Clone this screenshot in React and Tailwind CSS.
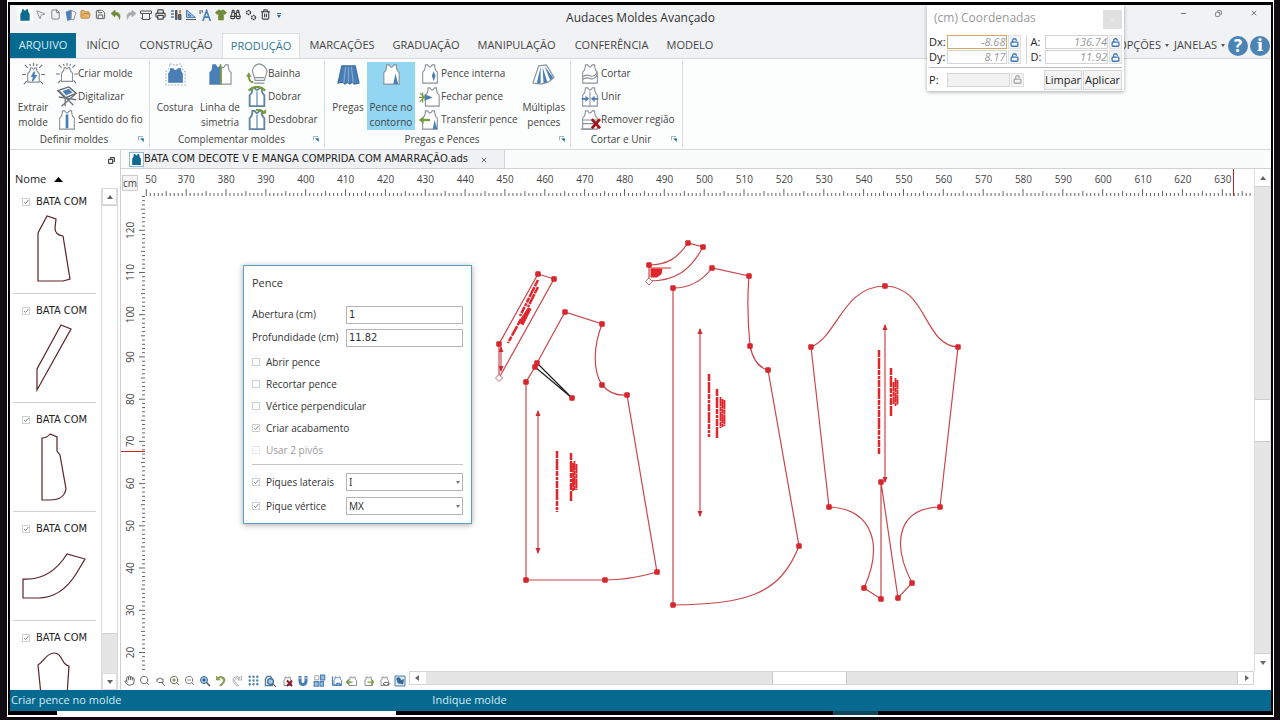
import React from "react";
import {
  MousePointer2, File, FolderOpen, Save, Printer, Binoculars, Trash2,
  Hand, Search, ZoomIn, ZoomOut, Grip, LockOpen, Copy, X, Minus,
} from "lucide-react";

const TANK = "M7 2 L9.5 2 Q12 7 14.5 2 L17 2 Q17 8 20 10 L20 22 L4 22 L4 10 Q7 8 7 2 Z";
const BLUE = "#4a7fb5";
const LINE = "#8b9299";
const GREEN = "#7a9a3c";

function Svg({ className = "size-[22px]", children }) {
  return (
    <svg className={className} viewBox="0 0 24 24" fill="none" stroke={LINE} strokeWidth="1.2" aria-hidden="true">
      {children}
    </svg>
  );
}

function Rays() {
  return <path d="M12 0V3M3 2L6 5M21 2L18 5M0 12H4M24 12H20M2 22L5 19M22 22L19 19M8 1L9 3M16 1L15 3" stroke="#6c747b" strokeWidth="1.200" />;
}
function SmallTank({ fill = "#fff" }) {
  return <path d="M9 5H10.5Q12 8 13.5 5H15Q15 9 18 11V20H6V11Q9 9 9 5Z" fill={fill} stroke="#8b9299" />;
}

const icons = {
  extrair: <><Rays /><SmallTank /><path d="M13 9L10 14H12L11 19L15 13H12.500Z" fill={BLUE} stroke={BLUE} /></>,
  criar: <><Rays /><SmallTank /></>,
  digitalizar: <><path d="M2 5L14 1L22 8L10 13Z" fill="#fff" stroke="#5b6269" strokeWidth="1.5" /><path d="M7 5.500L14 3L18 7L11 10Z" fill={BLUE} stroke="none" /><path d="M4 6L19 21M21 9L6 22M10 13V22M3 12L22 15" stroke="#6c747b" strokeWidth="1.400" /></>,
  sentido: <><path d={TANK} fill="#fff" /><path d="M12 6V21" stroke={BLUE} strokeWidth="3" /></>,
  costura: <><path d="M6 1H9.500Q12 4 14.500 1H18Q18 7 22 9V23H2V9Q6 7 6 1Z" strokeDasharray="2 1.500" stroke="#a9bccd" /><path d="M7 6H9.500Q12 10 14.500 6H17Q17 9 19 11V20H5V11Q7 9 7 6Z" fill={BLUE} stroke={BLUE} /></>,
  simetria: <><path d="M11 4Q8 6 7 2H4Q4 8 1 10V22H11Z" fill={BLUE} stroke={BLUE} /><path d="M13 4Q16 6 17 2H20Q20 8 23 10V22H13Z" fill="#fff" /><path d="M12 1V23" stroke={GREEN} strokeWidth="1.500" /></>,
  bainha: <><path d="M14 1Q8 2 7 9L10 19H20L23 9Q21 2 14 1Z" fill="#fff" /><path d="M10 16H20M9 22H20" /><path d="M8 21Q3 21 3 13" stroke={GREEN} strokeWidth="2" /><path d="M0 15L3 10L6 15Z" fill={GREEN} stroke="none" /></>,
  dobrar: <><path d={TANK} fill="#fff" stroke="#5f84a8" strokeWidth="2" /><path d="M12 6V22" stroke={BLUE} /><path d="M3 5Q12 -3 21 5" stroke={GREEN} strokeWidth="2.500" /></>,
  desdobrar: <><path d={TANK} fill="#fff" stroke="#5f84a8" strokeWidth="2" /><path d="M12 6V22" stroke={BLUE} /><path d="M11 1Q17 0 20 5" stroke={GREEN} strokeWidth="2.500" /><path d="M16 5H22V0Z" fill={GREEN} stroke="none" /></>,
  pregas: <><path d="M5 3H19L23 21L18 22L16 20L13 22L11 20L8 22L6 20L1 21Z" fill={BLUE} stroke="#3b6c9f" /><path d="M9 4L7 21M12 4V20M15 4L17 21" stroke="#86abd0" /></>,
  contorno: <><path d={TANK} fill="#fff" /><path d="M16 11L14 22H19Z" fill={BLUE} stroke="none" /></>,
  interna: <><path d={TANK} fill="#fff" /><path d="M16 9L14 14L16 20L18 14Z" fill={BLUE} stroke="none" /></>,
  fechar: <><path d="M10 2H12Q14 7 17 2H19Q19 8 22 10V22H7V10Q10 8 10 2Z" fill="#fff" /><path d="M6 9L15 12.500L6 16Z" fill={BLUE} stroke="none" /><path d="M0 12.500H7M1 8L6 12L1 17M4 7V18" stroke={GREEN} strokeWidth="1.300" /></>,
  transferir: <><path d={TANK} fill="#fff" /><path d="M17 12L15 22H20Z" fill={BLUE} stroke="none" /><path d="M1 12H12" stroke={GREEN} strokeWidth="2.500" /><path d="M5 8V16L0 12Z" fill={GREEN} stroke="none" /></>,
  multiplas: <><path d="M7 3L15 2L23 15L17 20L9 22L1 21Z" fill="#fff" /><path d="M9 4L5 21H9ZM11 4L12 21L16 20ZM13 3L19 18L22 15Z" fill={BLUE} stroke="none" /></>,
  cortar: <><path d={TANK} fill="#fff" /><path d="M4 15Q8 12 12 14T20 10M4 18Q8 15 12 17T20 13" /></>,
  unir: <><path d={TANK} fill="#fff" /><path d="M12 6V22" /><path d="M3 14H8M21 14H16" stroke={BLUE} strokeWidth="2" /><path d="M7 10.500V17.500L11 14ZM17 10.500V17.500L13 14Z" fill={BLUE} stroke="none" /></>,
  remover: <><path d={TANK} fill="#fff" /><path d="M4 12H20M4 16H20M2 22H14" /><path d="M14 11L23 21M23 11L14 21" stroke="#a3161b" strokeWidth="3" /></>,
};

function BigButton({ icon, lines, active, className }) {
  return (
    <button type="button" className={`flex h-[68px] flex-col items-center justify-between text-[10px] leading-[15px] ${active ? "bg-[#92d6f2]" : ""} ${className}`}>
      <Svg className="mt-px size-[23px]">{icons[icon]}</Svg>
      <span className="flex h-[30px] flex-col">{lines.map((l) => <span key={l}>{l}</span>)}</span>
    </button>
  );
}

function SmallButtons({ items }) {
  return (
    <div className="flex flex-col">
      {items.map(([icon, label]) => (
        <button key={label} type="button" className="flex h-[23px] items-center text-left text-[10px] whitespace-nowrap">
          <Svg>{icons[icon]}</Svg>
          <span>{label}</span>
        </button>
      ))}
    </div>
  );
}

function Group({ title, className, children }) {
  return (
    <section className={`my-[2px] flex flex-col border-r border-[#d9dcdf] ${className}`}>
      <div className="flex h-[70px] items-start pt-px">{children}</div>
      <div className="flex flex-1 items-center pr-[5px] text-[10px]">
        <span className="flex-1 text-center">{title}</span>
        <button type="button" aria-label={`Opções de ${title}`}>
          <svg className="size-[6px]" viewBox="0 0 7 7" fill="none" stroke="#8fa3b0"><path d="M.5 5V.5H6" /><path d="M3 3L6.500 3V6.500L5 5Z" fill="#167094" stroke="#167094" strokeWidth=".5" /></svg>
        </button>
      </div>
    </section>
  );
}

function TankIcon({ className, color = "#0f6a92" }) {
  return <svg className={className} viewBox="0 0 24 24" aria-hidden="true"><path d={TANK} fill={color} /></svg>;
}

const BACK = "M10 2L2 9L10 16V12Q17 11 19 21Q24 7 10 6Z";
const FORWARD = "M14 2L22 9L14 16V12Q7 11 5 21Q0 7 14 6Z";
const l = "size-[11px]";
const quick = [
  ["Selecionar", <MousePointer2 className={l} color="#888" />],
  ["Novo", <File className={l} color="#777" />],
  ["Novo molde", <Svg className="size-[12px]"><path d="M2 6L12 2L15 20L5 23Z" fill={BLUE} stroke={BLUE} /><path d="M13 3L22 7L17 22L12 20Z" fill="#fff" strokeWidth="2" /></Svg>],
  ["Abrir", <FolderOpen className={l} color="#b9853f" fill="#e4b56d" />],
  ["Salvar", <Save className={l} color="#555" />],
  ["Desfazer", <Svg className="size-[12px]"><path d={BACK} fill="#71893a" stroke="#71893a" /></Svg>],
  ["Refazer", <Svg className="size-[12px]"><path d={FORWARD} fill="#aaa" stroke="#aaa" /></Svg>],
  ["Plotar", <Svg className="size-[12px]"><path d="M1 4H23V9H1ZM5 9V21H19V9M5 21L2 17M19 21L22 17" stroke="#555" strokeWidth="2" /></Svg>],
  ["Imprimir", <Printer className={l} color="#444" strokeWidth={2.5} />],
  ["Tabela", <Svg className="size-[12px]"><path d="M2 4H8M2 10H8M2 16H8" stroke={BLUE} strokeWidth="3" /><path d="M11 3H14V21H11ZM17 11H22V21H17Z" fill="#666" stroke="#555" strokeWidth="2" /><path d="M20 2V9" stroke="#b4763d" strokeWidth="3" /></Svg>],
  ["Medir", <Svg className="size-[12px]"><path d="M3 2V17H21ZM7 10V14H12Z" fill="#a8c8e2" stroke={BLUE} strokeWidth="2" /><path d="M2 21H22" stroke="#555" strokeWidth="2" /></Svg>],
  ["Texto", <Svg className="size-[13px]"><path d="M7 22L14 3L21 22M10 15H19" stroke={BLUE} strokeWidth="3" /><path d="M2 2V9M6 2V7" stroke="#555" strokeWidth="2" /></Svg>],
  ["Tecido", <Svg className="size-[12px]"><path d="M7 2H10Q12 6 14 2H17L23 7L20 11L17 9V22H7V9L4 11L1 7Z" fill="#71893a" stroke="#71893a" /></Svg>],
  ["Localizar", <Binoculars className={l} color="#444" strokeWidth={2.5} />],
  ["Configurar", <Svg className="size-[12px]"><circle cx="7" cy="7" r="4" stroke="#444" strokeWidth="3" strokeDasharray="3 1" /><circle cx="17" cy="17" r="4" stroke="#444" strokeWidth="3" strokeDasharray="3 1" /></Svg>],
  ["Excluir", <Trash2 className={l} color="#444" strokeWidth={2.5} />],
];

const tabs = [["INÍCIO", "w-[54px]"], ["CONSTRUÇÃO", "w-[92px]"], ["PRODUÇÃO", "w-[78px]"], ["MARCAÇÕES", "w-[84px]"], ["GRADUAÇÃO", "w-[84px]"], ["MANIPULAÇÃO", "w-[97px]"], ["CONFERÊNCIA", "w-[93px]"], ["MODELO", "w-[64px]"]];

function LockButton({ muted }) {
  return (
    <button type="button" aria-label="Travar" className="flex w-[13px] items-center justify-center border border-[#e0e0e0] bg-[#f5f5f5]">
      <LockOpen className="size-[9px]" color={muted ? "#aaa" : "#3f79b3"} strokeWidth={3.5} />
    </button>
  );
}

function Coord({ label, value, labelClass, active, muted }) {
  return (
    <div className="flex min-w-0 flex-1 gap-px">
      <label htmlFor={`c-${label}`} className={`shrink-0 ${labelClass}`}>{label}:</label>
      <input id={`c-${label}`} defaultValue={value} className={`h-[14px] w-0 min-w-0 flex-1 border text-right text-[11px] text-[#999] italic ${active ? "border-[#d2a866]" : "border-[#d4d4d4]"} ${muted ? "bg-[#f2f2f2]" : "bg-white"}`} />
      <LockButton muted={muted} />
    </div>
  );
}

function Coordinates() {
  return (
    <div role="dialog" aria-label="Coordenadas" className="absolute top-0 right-[147px] flex w-[197px] flex-col bg-white px-[2px] text-[11px] leading-[14px] text-[#222] shadow-[0_1px_4px_#0005]">
      <div className="flex h-[30px] items-start justify-between pt-[5px] pl-[5px] text-[12px] text-[#999]">
        <span className="leading-[16px]">(cm) Coordenadas</span>
        <button type="button" aria-label="Fechar" className="flex size-[19px] items-center justify-center bg-[#e0e0e0] text-[#f4f4f4]"><X className="size-[7px]" /></button>
      </div>
      <div className="flex gap-[5px]">
        <div className="flex flex-1 flex-col gap-px">
          <Coord label="Dx" value="-8.68" labelClass="w-[17px]" active />
          <Coord label="Dy" value="8.17" labelClass="w-[17px]" />
        </div>
        <div className="flex flex-1 flex-col gap-px border-l border-[#d5d5d5] pl-[4px]">
          <Coord label="A" value="136.74" labelClass="w-[13px]" />
          <Coord label="D" value="11.92" labelClass="w-[13px]" />
        </div>
      </div>
      <div className="mt-[3px] flex h-[24px] items-center gap-[20px] border-t border-[#bbb]">
        <Coord label="P" value="" labelClass="w-[17px]" muted />
        <div className="flex gap-px">
          <button type="button" className="h-[20px] w-[38px] border border-[#d8d8d8] bg-[#f4f4f4]">Limpar</button>
          <button type="button" className="h-[20px] w-[39px] border border-[#d8d8d8] bg-[#f4f4f4]">Aplicar</button>
        </div>
      </div>
    </div>
  );
}

function Check({ id, checked, disabled, label }) {
  return (
    <label htmlFor={id} className={`flex items-center gap-[6px] ${disabled ? "text-[#999]" : ""}`}>
      <span className="grid size-[8px]">
        <input id={id} type="checkbox" defaultChecked={checked} disabled={disabled} className={`peer col-start-1 row-start-1 size-[8px] appearance-none border bg-white ${disabled ? "border-[#e6e6e6]" : "border-[#cdd0d3]"}`} />
        <svg className="pointer-events-none invisible col-start-1 row-start-1 size-[8px] peer-checked:visible" viewBox="0 0 8 8" fill="none" stroke="#888"><path d="M2 4L3.500 5.500L6.500 2" /></svg>
      </span>
      {label}
    </label>
  );
}

const thumbs = [
  "M38 240V281H63L70 279L63 236Q55 235 55 228L56 219L47 216L38 233Z",
  "M37 390V369L61 325L71 329L37 390Z",
  "M42 500V438Q47 438 50 434L57 437V451L60 455L66 489Q64 500 50 500Z",
  "M23 598V579Q50 581 67 554L85 559L76 574Q61 598 38 598Z",
  "M41 695L38 665C44 662 46 653 54 653C63 653 61 665 69 666L67 695",
];

function PatternList() {
  return (
    <aside className="flex w-[111px] shrink-0 flex-col border-r border-[#cfcfcf] bg-white text-[#222]">
      <div className="flex h-[20px] items-center justify-end pr-[5px]"><button type="button" aria-label="Restaurar painel"><Copy className="size-[7px] rotate-90" strokeWidth={4} color="#444" /></button></div>
      <div className="flex h-[18px] items-center gap-[8px] pl-[5px] text-[11px]">Nome <svg className="h-[5px] w-[9px]" viewBox="0 0 9 5"><path d="M0 5L4.500 0L9 5Z" /></svg></div>
      <div className="flex min-h-0 flex-1">
        <ul className="flex-1 overflow-hidden pl-[3px]">
          {thumbs.map((d, i) => (
            <li key={d} className="mr-[5px] h-[109px] border-b border-[#cdd0d4] pt-[10px] first:h-[106px] first:pt-[7px]">
              <div className="pl-[9px] font-['DejaVu_Sans_Condensed','Open_Sans',sans-serif] text-[11px] leading-[14px]"><Check id={`t-${i}`} checked label="BATA COM" /></div>
              <svg className="h-[84px] w-full" viewBox={`13 ${209 + i * 109} 83 84`} fill="none" stroke="#5a2226" strokeWidth="1.200"><path d={d} /></svg>
            </li>
          ))}
        </ul>
        <div className="mr-[2px] flex w-[17px] flex-col border-x border-[#dadada] bg-[#e5e5e5]">
          <button type="button" aria-label="Subir" className="flex h-[17px] items-center justify-center border border-[#dcdcdc] bg-white"><Tri d="M0 4L3 0L6 4Z" /></button>
          <div className="flex-1 border-y border-[#d0d0d0] bg-white" />
          <div className="h-[39px]" />
          <button type="button" aria-label="Descer" className="flex h-[17px] items-center justify-center border border-[#dcdcdc] bg-white"><Tri d="M0 0L3 4L6 0Z" /></button>
        </div>
      </div>
    </aside>
  );
}

function Tri({ d }) {
  return <svg className="size-[6px]" viewBox="0 -1 6 6" fill="#666"><path d={d} /></svg>;
}

function HorizontalRuler() {
  const ticks = [];
  for (let i = 0; i < 278; i++) {
    const x = 146.3 + i * 3.985;
    const h = i % 10 === 0 ? 7 : i % 5 === 0 ? 5 : 3;
    ticks.push(`M${x.toFixed(1)} 196V${196 - h}`);
  }
  return (
    <svg className="h-[27px] min-w-0 flex-1" fontSize="10" fill="#444" textAnchor="middle">
      <g transform="translate(-145 -169)">
        <path d={ticks.join("")} stroke="#666" />
        <text x="151" y="183">50</text>
        {Array.from({ length: 27 }, (_, i) => <text key={i} x={186.2 + i * 39.87} y="183">{370 + i * 10}</text>)}
        <rect x="1233" y="169" width="1" height="27" fill="#b3262d" />
      </g>
    </svg>
  );
}

function VerticalRuler() {
  const ticks = [];
  for (let i = 0; i < 113; i++) {
    const y = 196.5 + i * 4.222;
    const k = (i + 2) % 10;
    const w = k === 0 ? 6 : k === 5 ? 4 : 3;
    ticks.push(`M145 ${y.toFixed(1)}H${145 - w}`);
  }
  return (
    <svg className="w-[24px] shrink-0" fontSize="10" fill="#444" textAnchor="middle">
      <g transform="translate(-121 -196)">
        <path d={ticks.join("")} stroke="#666" />
        {Array.from({ length: 11 }, (_, i) => <text key={i} transform={`translate(134 ${230.3 + i * 42.22}) rotate(-90)`}>{120 - i * 10}</text>)}
        <rect x="121" y="451" width="24" height="1" fill="#c9282e" />
      </g>
    </svg>
  );
}

const nodes = [[538,274],[554,279],[499,344],[565,312],[602,324],[602,385],[627,395],[657,572],[605,580],[526,580],[526,382],[537,363],[535,367],[572,398],[649,265],[688,243],[703,247],[673,288],[712,268],[749,276],[750,346],[768,370],[799,546],[673,605],[885,286],[811,347],[829,507],[864,588],[881,599],[881,482],[898,598],[912,583],[940,507],[958,347]];
const grain = [[501,347,371],[538,411,553],[700,329,516],[885,325,482]];
const notes = [[557,451,512],[571,453,501],[709,374,437],[717,389,438],[879,350,454],[891,368,416]];

function Drawing() {
  return (
    <svg className="size-full" fill="none" role="img" aria-label="Moldes da bata">
      <g transform="translate(-145 -196)">
        <g stroke="#c9474c" strokeWidth="1.200">
          <path d="M538 274L554 279L499 378V344Z" />
          <path d="M537 363L565 312L602 324C594 345 592 370 602 385C608 392 617 396 627 395L657 572C640 577 622 580 605 580H526V382L535 367" />
          <path d="M649 265C667 265 678 258 688 243L703 247C690 271 675 281 649 281Z" />
          <path d="M673 288C690 288 703 280 712 268L749 276C747 300 748 325 750 346C753 360 760 368 768 370L799 546C780 595 746 604 673 605Z" />
          <path d="M885 286C842 287 838 336 811 347L829 507C872 509 884 544 864 588L881 599V482L898 598L912 583C890 540 900 508 940 507L958 347C923 345 928 287 885 286Z" />
          {grain.map(([x, a, b]) => <path key={x} d={`M${x} ${a}V${b}`} />)}
        </g>
        <g fill="#cf2a30">
          {grain.map(([x, a, b]) => <path key={x} d={`M${x} ${a - 1}L${x + 2.5} ${a + 5}H${x - 2.5}ZM${x} ${b + 1}L${x + 2.5} ${b - 5}H${x - 2.5}Z`} />)}
        </g>
        <g stroke="#e0262b" strokeWidth="2.500" strokeDasharray="7 1 11 1 5 1 3 1">
          {notes.map(([x, a, b]) => <path key={x} d={`M${x} ${a}V${b}`} />)}
          <path d="M538 280L520 316M538 287L528 307M521 319L508 343" />
        </g>
        <g stroke="#e0262b" fill="#e0262b">
          <path d="M528 308L531 309L523 325L519 322Z" />
          <path d="M573 463V491M574.500 461V490M576.500 464V490M720.500 397V428M722.500 399V427M724.500 400V426M893.500 382V404M895.500 378V406M897.500 380V405" strokeWidth="1.800" strokeDasharray="9 .5 5 .5" />
          <path d="M650 268H671" />
          <path d="M651 269H662L661 274L657 277H651Z" />
        </g>
        <path d="M537 363L572 398L535 367" stroke="#222" strokeWidth="1.200" />
        {nodes.map(([x, y]) => <rect key={`${x}-${y}`} x={x - 2.5} y={y - 2.5} width="5" height="5" rx="1" fill="#d9252c" stroke="#c81f26" strokeWidth=".5" />)}
        <path d="M499 374.500L502.500 378L499 381.500L495.500 378ZM649 278L652.500 281.500L649 285L645.500 281.500Z" fill="#fff" stroke="#c9676b" />
      </g>
    </svg>
  );
}

function Field({ id, label, value }) {
  return (
    <div className="flex h-[23px] items-center">
      <label htmlFor={id} className="w-[94px] whitespace-nowrap">{label}</label>
      <input id={id} defaultValue={value} className="h-[18px] w-0 flex-1 border border-[#b5b5b5] bg-white px-[2px] font-['DejaVu_Sans_Condensed','Noto_Sans',sans-serif] text-[11px]" />
    </div>
  );
}

function SelectRow({ id, label, value }) {
  return (
    <div className="flex h-[24px] items-center">
      <div className="w-[94px]"><Check id={id} checked label={label} /></div>
      <div className="grid flex-1 items-center">
        <select aria-label={label} defaultValue={value} className="col-start-1 row-start-1 h-[18px] w-full appearance-none border border-[#b5b5b5] bg-white px-[2px] font-['Noto_Sans',sans-serif]"><option>{value}</option></select>
        <svg className="pointer-events-none col-start-1 row-start-1 mr-[3px] h-[3px] w-[4px] justify-self-end" viewBox="0 0 4 3" fill="#777"><path d="M0 0H4L2 3Z" /></svg>
      </div>
    </div>
  );
}

function PenceDialog() {
  return (
    <form aria-label="Pence" className="absolute top-[69px] left-[98px] w-[229px] border border-[#5b9fc9] bg-white px-[8px] pb-[5px] text-[10px] text-[#333] shadow-[0_1px_6px_#0005]">
      <h2 className="flex h-[37px] items-center pb-[3px] text-[11px]">Pence</h2>
      <Field id="ab" label="Abertura (cm)" value="1" />
      <Field id="pf" label="Profundidade (cm)" value="11.82" />
      <div className="flex flex-col pt-[2px] *:h-[22px]">
        <Check id="p1" label="Abrir pence" />
        <Check id="p2" label="Recortar pence" />
        <Check id="p3" label="Vértice perpendicular" />
        <Check id="p4" checked label="Criar acabamento" />
        <Check id="p5" disabled label="Usar 2 pivôs" />
      </div>
      <div className="mt-[3px] border-t border-[#c4c4c4] pt-[5px]">
        <SelectRow id="s1" label="Piques laterais" value="I" />
        <SelectRow id="s2" label="Pique vértice" value="MX" />
      </div>
    </form>
  );
}

const molde = (extra, s = "#7b838a") => <Svg className="size-[12px]"><path d="M8 4H10Q13 8 16 4H18Q18 9 21 11V21H6V11Q9 9 8 4Z" stroke={s} strokeWidth="1.800" />{extra}</Svg>;
const viewTools = [
  ["Mover", <Hand className={l} color="#555" />],
  ["Zoom", <Search className={l} color="#666" />],
  ["Zoom molde", <Svg className="size-[12px]"><path d="M6 14V8H9Q12 4 15 8H18V15H9M16 15L22 22" stroke="#666" strokeWidth="2" /></Svg>],
  ["Aproximar", <ZoomIn className={l} color="#596b3c" />],
  ["Afastar", <ZoomOut className={l} color="#777" />],
  ["Zoom tudo", <Svg className="size-[12px]"><circle cx="10" cy="10" r="7" fill="#a9c9e5" stroke="#356a9c" strokeWidth="2" /><path d="M8 8H12V12H8Z" fill="#285985" stroke="#285985" /><path d="M15 15L22 22" stroke="#555" strokeWidth="3" /></Svg>],
  ["Vista anterior", <Svg className="size-[12px]"><path d="M3 2V10H10L7 7Q13 4 16 8Q19 13 9 21L12 22Q23 13 19 6Q13 0 6 5Z" fill="#8fa255" stroke="#71893a" /></Svg>],
  ["Próxima vista", <Svg className="size-[12px]"><path d="M21 2V10H14L17 7Q11 4 8 8Q5 13 15 21L12 22Q1 13 5 6Q11 0 18 5Z" fill="#fff" stroke="#999" strokeWidth="1.500" /></Svg>],
  ["Grade", <Grip className="size-[13px]" color={BLUE} strokeWidth={2.5} />],
  ["Visualizar", <Svg className="size-[14px]"><path d="M4 20V9L7 4H13L16 9V20Z" fill="#d6e4f0" stroke="#55789a" strokeWidth="2" /><circle cx="13" cy="13" r="5" fill="#a9c9e5" stroke="#356a9c" strokeWidth="2" /><path d="M17 17L22 22" stroke="#555" strokeWidth="2" /></Svg>],
  ["Ocultar", molde(<path d="M12 11L22 22M22 11L12 22" stroke="#8c1c2a" strokeWidth="4" />)],
  ["Ímã", <Svg className="size-[12px]"><path d="M6 2V12Q6 19 12 19Q18 19 18 12V2" stroke={BLUE} strokeWidth="6" /><path d="M3 6H9M15 6H21" stroke="#fff" strokeWidth="1.500" /></Svg>],
  ["Organizar", <Svg className="size-[14px]"><path d="M13 2H20V10H13ZM2 13H9V21H2ZM12 13H18V21H12Z" fill="#9dbfdd" stroke={BLUE} strokeWidth="2" /><path d="M3 3H10V10H3Z" stroke="#999" strokeWidth="1.500" /></Svg>],
  ["Mostrar molde", molde(<path d="M3 3V20H20Q15 12 9 20" stroke={BLUE} strokeWidth="2.500" />, BLUE)],
  ["Anterior", molde(<path d="M1 14H13M6 9L1 14L6 19" stroke={GREEN} strokeWidth="2.500" />)],
  ["Próximo", molde(<path d="M11 14H23M18 9L23 14L18 19" stroke={GREEN} strokeWidth="2.500" />)],
  ["Ver molde", molde(<path d="M10 18Q16 11 23 18Q16 24 10 18Z" fill="#fff" stroke="#555" strokeWidth="2" />)],
  ["Imagem", <Svg className="size-[12px]"><path d="M2 2H22V22H2Z" fill="#dce9f5" stroke={BLUE} strokeWidth="2" /><path d="M5 7Q12 2 14 11L19 9L18 18L8 16Z" fill="#38678f" stroke="#38678f" /></Svg>],
];

function Workspace() {
  return (
    <main className="flex min-w-0 flex-1 flex-col bg-white">
      <div className="flex h-[19px] border-b border-[#cfd2d5] bg-[#fafbfb] pl-[8px]">
        <div className="flex items-center border-r border-[#d0d3d6] bg-[#eff1f3] pt-px pr-[16px] text-[11px] text-[#222]">
          <span className="flex size-[15px] items-center justify-center border border-[#8fb9cc] bg-white"><TankIcon className="size-[13px]" /></span>
          <span className="font-['DejaVu_Sans_Condensed','Open_Sans',sans-serif] whitespace-nowrap">BATA COM DECOTE V E MANGA COMPRIDA COM AMARRAÇÃO.ads</span>
          <button type="button" aria-label="Fechar arquivo" className="ml-[12px]"><X className="size-[8px]" color="#666" strokeWidth={3} /></button>
        </div>
      </div>
      <div className="flex min-h-0 flex-1">
        <div className="flex min-w-0 flex-1 flex-col">
          <div className="flex">
            <div className="flex w-[24px] shrink-0 items-center pl-px"><span className="border border-[#ccc] bg-[#f4f4f4] text-[10px] leading-[14px]">cm</span></div>
            <HorizontalRuler />
          </div>
          <div className="flex min-h-0 flex-1">
            <VerticalRuler />
            <div className="relative min-w-0 flex-1">
              <Drawing />
              <PenceDialog />
            </div>
          </div>
        </div>
        <div className="flex w-[17px] flex-col border-x border-[#dcdcdc] bg-[#e5e5e5]">
          <button type="button" aria-label="Rolar para cima" className="flex h-[18px] items-center justify-center border-b border-[#d0d0d0] bg-white"><Tri d="M0 4L3 0L6 4Z" /></button>
          <div className="flex-[213]" />
          <div className="flex-[41] border-y border-[#ccc] bg-white" />
          <div className="flex-[212]" />
          <button type="button" aria-label="Rolar para baixo" className="flex h-[18px] items-center justify-center border-t border-[#d0d0d0] bg-white"><Tri d="M0 0L3 4L6 0Z" /></button>
        </div>
      </div>
      <div className="flex h-[19px]">
        <div className="flex w-[288px] shrink-0 items-center justify-between px-[3px]">
          {viewTools.map(([name, icon]) => <button key={name} type="button" aria-label={name}>{icon}</button>)}
        </div>
        <div className="mr-[17px] flex h-[14px] flex-1 border border-[#d5d5d5] bg-[#e5e5e5]">
          <button type="button" aria-label="Rolar à esquerda" className="flex w-[16px] items-center justify-center bg-white"><Tri d="M4 -1L0 2L4 5Z" /></button>
          <div className="flex-[347]" />
          <div className="flex-[74] border-x border-[#c8c8c8] bg-white" />
          <div className="flex-[391]" />
          <button type="button" aria-label="Rolar à direita" className="flex w-[16px] items-center justify-center border-l border-[#ccc] bg-white"><Tri d="M2 -1L6 2L2 5Z" /></button>
        </div>
      </div>
    </main>
  );
}

export default function App() {
  return (
    <div className="flex h-screen flex-col bg-[#100c12] pr-[6px] pb-[3px] pl-[7px] font-['Open_Sans','Noto_Sans',sans-serif] text-[#444]">
      <div className="flex min-h-0 flex-1 flex-col border border-t-2 border-b-2 border-white bg-black">
        <div className="relative mx-[2px] mt-[3px] flex min-h-0 flex-1 flex-col overflow-hidden bg-[#f1f2f4]">
          <header className="flex h-[28px] shrink-0 items-start">
            <div className="flex h-[20px] w-[278px] items-center pl-[7px]">
              <span className="flex size-[16px] items-center justify-center bg-white"><TankIcon className="size-[14px]" /></span>
              <div className="flex">
                {quick.map(([name, icon]) => <button key={name} type="button" aria-label={name} className="flex w-[15px] justify-center">{icon}</button>)}
              </div>
              <svg className="ml-[4px] h-[5px] w-[4px]" viewBox="0 0 4 5" fill="#38627c"><path d="M0 0H4V1H0ZM0 2H4L2 5Z" /></svg>
            </div>
            <h1 className="flex-1 pt-[4px] pr-[16px] text-center text-[12px] leading-[17px] text-[#333]">Audaces Moldes Avançado</h1>
            <div className="flex h-[16px] w-[262px] items-center justify-end gap-[28px] pr-[13px] text-[#777]">
              <button type="button" aria-label="Minimizar"><Minus className="size-[7px]" strokeWidth={4} /></button>
              <button type="button" aria-label="Restaurar"><Copy className="size-[7px] rotate-90" strokeWidth={3} /></button>
              <button type="button" aria-label="Fechar"><X className="size-[8px]" strokeWidth={3} /></button>
            </div>
          </header>
          <nav className="flex h-[25px] shrink-0 items-stretch text-[11px]">
            <button type="button" className="w-[66px] bg-[#06698f] text-[#d9edf5]">ARQUIVO</button>
            {tabs.map(([t, w]) => (
              <button key={t} type="button" className={`${w} ${t === "PRODUÇÃO" ? "border-x border-t border-[#dcdfe2] bg-[#fcfdfd] text-[#2d7796]" : ""}`}>{t}</button>
            ))}
            <div className="flex flex-1 items-center justify-end">
              <button type="button" className="mr-[5px] flex items-center gap-[4px]">OPÇÕES <svg className="h-[3px] w-[4px]" viewBox="0 0 4 3" fill="#555"><path d="M0 0H4L2 3Z" /></svg></button>
              <button type="button" className="mr-[3px] flex items-center gap-[4px]">JANELAS <svg className="h-[3px] w-[4px]" viewBox="0 0 4 3" fill="#555"><path d="M0 0H4L2 3Z" /></svg></button>
              <button type="button" aria-label="Ajuda" className="mr-[2px] flex size-[20px] items-center justify-center rounded-full bg-[#4a83b4] text-[17px] leading-none font-bold text-white">?</button>
              <button type="button" aria-label="Informações" className="mr-px flex size-[20px] items-center justify-center rounded-full bg-[#4a83b4] font-['DejaVu_Serif',serif] text-[17px] leading-none font-bold text-white">i</button>
            </div>
          </nav>
          <div className="flex h-[92px] shrink-0 border-y border-[#d5d8da] bg-[#fcfdfd]">
            <Group title="Definir moldes" className="w-[140px]">
              <BigButton icon="extrair" lines={["Extrair", "molde"]} className="w-[46px]" />
              <SmallButtons items={[["criar", "Criar molde"], ["digitalizar", "Digitalizar"], ["sentido", "Sentido do fio"]]} />
            </Group>
            <Group title="Complementar moldes" className="w-[175px]">
              <BigButton icon="costura" lines={["Costura"]} className="w-[50px]" />
              <BigButton icon="simetria" lines={["Linha de", "simetria"]} className="w-[40px]" />
              <div className="pl-[6px]"><SmallButtons items={[["bainha", "Bainha"], ["dobrar", "Dobrar"], ["desdobrar", "Desdobrar"]]} /></div>
            </Group>
            <Group title="Pregas e Pences" className="w-[246px]">
              <div className="pl-[4px]"><BigButton icon="pregas" lines={["Pregas"]} className="w-[38px]" /></div>
              <BigButton icon="contorno" lines={["Pence no", "contorno"]} active className="w-[48px]" />
              <div className="pl-[4px]"><SmallButtons items={[["interna", "Pence interna"], ["fechar", "Fechar pence"], ["transferir", "Transferir pence"]]} /></div>
              <BigButton icon="multiplas" lines={["Múltiplas", "pences"]} className="flex-1" />
            </Group>
            <Group title="Cortar e Unir" className="w-[112px]">
              <div className="pl-[8px]"><SmallButtons items={[["cortar", "Cortar"], ["unir", "Unir"], ["remover", "Remover região"]]} /></div>
            </Group>
          </div>
          <div className="flex min-h-0 flex-1">
            <PatternList />
            <Workspace />
          </div>
          <footer className="shrink-0 bg-[#056990]">
            <div className="flex h-[21px] items-center text-[11px] text-[#d4eaf3]">
              <span className="w-1/3 pl-px">Criar pence no molde</span>
              <span className="pl-[2px]">Indique molde</span>
            </div>
            <div className="flex h-[4px] bg-black">
              <div className="w-[47px]" />
              <div className="w-[339px] bg-white" />
              <div className="w-[437px]" />
              <div className="w-[45px] bg-[#11485e]" />
            </div>
          </footer>
          <Coordinates />
        </div>
      </div>
    </div>
  );
}
